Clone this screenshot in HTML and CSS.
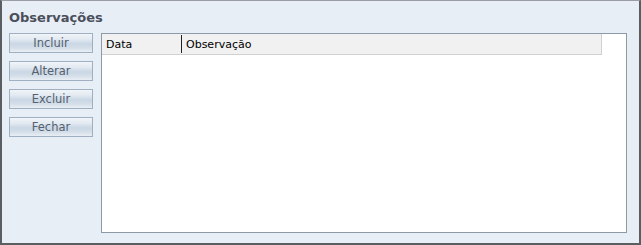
FILE: index.html
```html
<!DOCTYPE html>
<html>
<head>
<meta charset="utf-8">
<link rel="stylesheet" href="styles.css">
</head>
<body>
<div class="frame">
  <div class="title">Observações</div>
  <div class="content">
    <div class="buttons">
      <button class="btn">Incluir</button>
      <button class="btn">Alterar</button>
      <button class="btn">Excluir</button>
      <button class="btn">Fechar</button>
    </div>
    <div class="grid">
      <div class="header">
        <div class="col col-data">Data</div>
        <div class="col col-obs">Observação</div>
      </div>
    </div>
  </div>
</div>
</body>
</html>
```
FILE: styles.css
```css
html, body {
  margin: 0;
  padding: 0;
  width: 641px;
  height: 245px;
  overflow: hidden;
}
.frame {
  box-sizing: border-box;
  width: 641px;
  height: 245px;
  background: #e8eef6;
  border-top: 1px solid #9a9ea4;
  border-left: 2px solid #5a5e63;
  border-right: 2px solid #5a5e63;
  border-bottom: 2px solid #5a5e63;
  display: flex;
  flex-direction: column;
  font-family: "DejaVu Sans", Verdana, sans-serif;
}
.title {
  font-weight: bold;
  font-size: 13px;
  color: #4b4f5c;
  padding: 9px 0 0 7px;
  height: 22px;
  box-sizing: border-box;
  line-height: 15px;
}
.content {
  display: flex;
  padding: 10px 0 0 7px;
  flex: 1;
  box-sizing: border-box;
  padding-bottom: 10px;
}
.buttons {
  display: flex;
  flex-direction: column;
  gap: 8px;
  width: 84px;
  margin-right: 8px;
}
.btn {
  box-sizing: border-box;
  width: 84px;
  height: 20px;
  margin: 0;
  padding: 0;
  border: 1px solid #9fb0c2;
  background: linear-gradient(#f2f5f9 0%, #e2e9f1 30%, #c9d6e4 55%, #d6e0ea 80%, #e9eef4 100%);
  font-family: "DejaVu Sans", Verdana, sans-serif;
  font-size: 11.5px;
  color: #55616f;
  line-height: 18px;
}
.grid {
  box-sizing: border-box;
  width: 526px;
  border: 1px solid #8c9aa8;
  background: #ffffff;
}
.header {
  display: flex;
  width: 500px;
  height: 21px;
  box-sizing: border-box;
  background: #f1f1f1;
  border-bottom: 1px solid #d0d0d0;
  border-right: 1px solid #d0d0d0;
}
.col {
  font-size: 11px;
  color: #000;
  line-height: 21px;
  padding-left: 4px;
  box-sizing: border-box;
}
.col-data {
  width: 80px;
  border-right: 1px solid #222;
  margin: 1px 0 1px 0;
  line-height: 19px;
}
.col-obs {
  flex: 1;
}
```
